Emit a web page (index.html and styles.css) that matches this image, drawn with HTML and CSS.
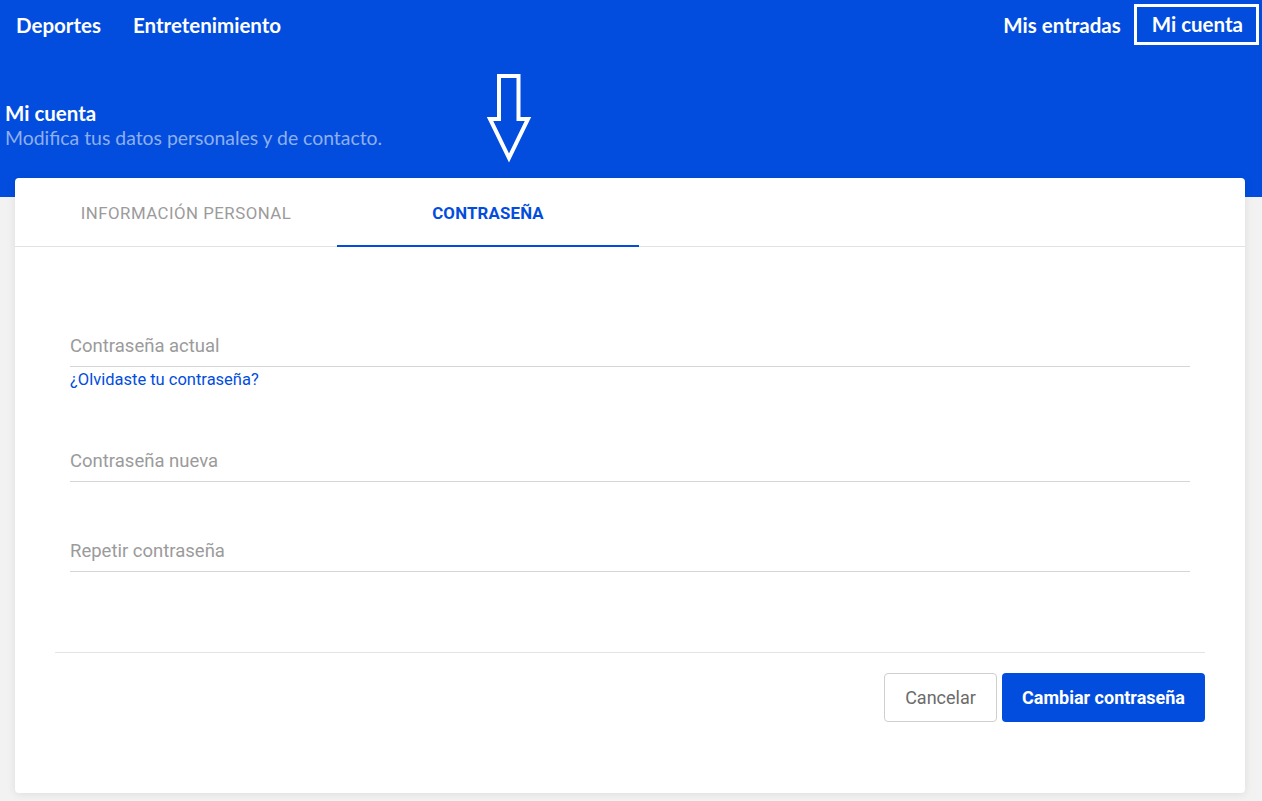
FILE: index.html
```html
<!DOCTYPE html>
<html>
  <head>
    <meta charset="utf-8">
    <title>Mi cuenta</title>
    <link rel="stylesheet" href="styles.css">
  </head>
  <body>
    <div class="top">
      <div class="nav">
        <div class="nav_left">
          <a class="nav_item" href="#">Deportes</a>
          <a class="nav_item" href="#">Entretenimiento</a>
        </div>
        <div class="nav_right">
          <a class="nav_item" href="#">Mis entradas</a>
          <a class="nav_item nav_marked" href="#">Mi cuenta</a>
        </div>
      </div>
      <div class="page_title">
        <h1>Mi cuenta</h1>
        <p>Modifica tus datos personales y de contacto.</p>
      </div>
      <svg class="hint_arrow" width="46" height="92" viewBox="0 0 46 92">
        <polygon points="13,4 32.5,4 32.5,47 42,47 23,86 4,47 13,47" fill="none" stroke="#fff" stroke-width="4" stroke-linejoin="miter"/>
      </svg>
    </div>

    <div class="card">
      <div class="tabs">
        <div class="tab">Información personal</div>
        <div class="tab tab_active">Contraseña</div>
      </div>

      <form class="pass_form">
        <div class="fields">
          <div class="field field_first">
            <label>Contraseña actual</label>
          </div>
          <a class="forgot" href="#">¿Olvidaste tu contraseña?</a>
          <div class="field field_new">
            <label>Contraseña nueva</label>
          </div>
          <div class="field field_repeat">
            <label>Repetir contraseña</label>
          </div>
        </div>
        <div class="actions">
          <button type="button" class="btn btn_cancel">Cancelar</button>
          <button type="button" class="btn btn_main">Cambiar contraseña</button>
        </div>
      </form>
    </div>
  </body>
</html>
```

FILE: styles.css
```css
html, body{
  margin: 0;
  padding: 0;
}
body{
  background: #f2f2f2;
  font-family: Roboto, "Liberation Sans", sans-serif;
  width: 1262px;
  height: 801px;
  overflow: hidden;
}
.top{
  position: relative;
  background: #024dde;
  height: 197px;
  color: #fff;
  font-family: Lato, "Open Sans", sans-serif;
}
.nav{
  display: flex;
  justify-content: space-between;
  align-items: center;
  height: 49px;
  padding: 0 3px 0 16px;
}
.nav_left, .nav_right{
  display: flex;
  align-items: center;
}
.nav_item{
  color: #fff;
  text-decoration: none;
  font-size: 20.5px;
  font-weight: 700;
}
.nav_left .nav_item{
  margin-right: 32px;
}
.nav_right .nav_item{
  margin-left: 13px;
}
.nav_marked{
  border: 3px solid #fff;
  padding: 5px 13px 6px 15px;
  line-height: 24px;
}
.page_title{
  padding: 52px 0 0 5px;
}
.page_title h1{
  margin: 0;
  font-size: 20.5px;
  font-weight: 700;
  line-height: 24px;
}
.page_title p{
  margin: 0;
  font-size: 19.4px;
  line-height: 25px;
  color: #8eafef;
}
.hint_arrow{
  position: absolute;
  left: 486px;
  top: 72px;
}

.card{
  position: relative;
  margin: -19px 17px 0 15px;
  height: 615px;
  background: #fff;
  border-radius: 4px;
  box-shadow: 0 1px 10px rgba(0,0,0,0.09);
}
.tabs{
  display: flex;
  height: 68px;
  padding-left: 20px;
  border-bottom: 1px solid #e3e3e3;
}
.tab{
  width: 302px;
  display: flex;
  align-items: center;
  justify-content: center;
  text-transform: uppercase;
  font-size: 16.8px;
  letter-spacing: 0.5px;
  color: #9b9b9b;
  padding-top: 2px;
  box-sizing: border-box;
}
.tab_active{
  color: #024dde;
  font-weight: 700;
  letter-spacing: 0.2px;
  border-bottom: 2px solid #024dde;
  margin-bottom: -1px;
}
.pass_form{
  padding: 0 40px;
}
.fields{
  padding: 0 15px;
  display: flex;
  flex-direction: column;
}
.field{
  border-bottom: 1px solid #d6d6d6;
  padding-bottom: 10px;
}
.field label{
  display: block;
  font-size: 18.5px;
  line-height: 20px;
  color: #9b9b9b;
}
.field_first{
  margin-top: 89px;
}
.forgot{
  margin-top: 4px;
  font-size: 16.5px;
  line-height: 18px;
  color: #024dde;
  text-decoration: none;
  align-self: flex-start;
}
.field_new{
  margin-top: 62px;
}
.field_repeat{
  margin-top: 59px;
}
.actions{
  margin-top: 80px;
  border-top: 1px solid #e3e3e3;
  padding-top: 20px;
  display: flex;
  justify-content: flex-end;
}
.btn{
  height: 49px;
  border-radius: 4px;
  font-family: Roboto, "Liberation Sans", sans-serif;
  font-size: 18px;
  cursor: pointer;
}
.btn_cancel{
  width: 113px;
  background: #fff;
  border: 1px solid #cfcfcf;
  color: #6b6b6b;
  margin-right: 5px;
}
.btn_main{
  width: 203px;
  background: #024dde;
  border: none;
  color: #fff;
  font-weight: 700;
}
```
